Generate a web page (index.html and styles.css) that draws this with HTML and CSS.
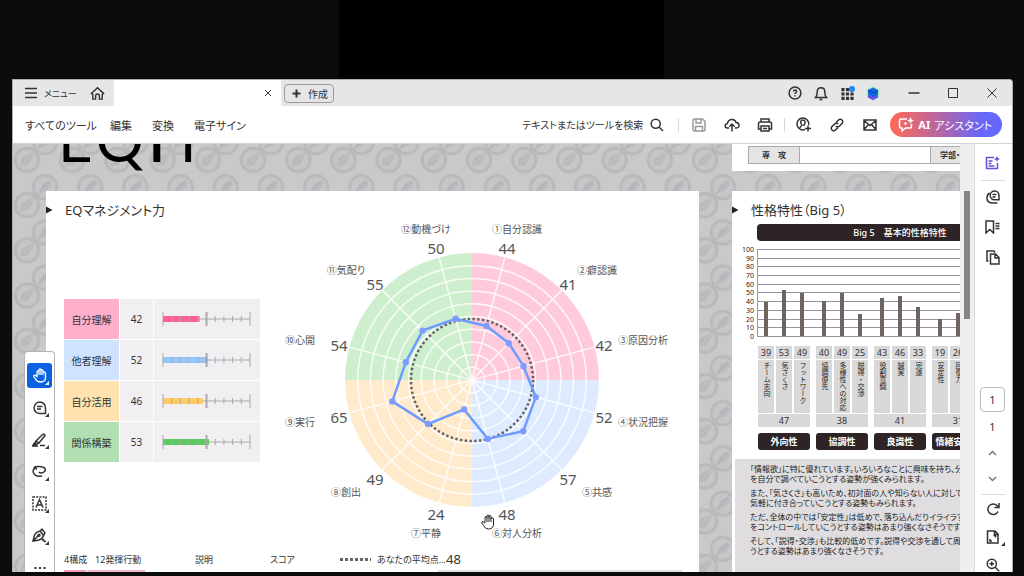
FILE: index.html
```html
<!DOCTYPE html>
<html lang="ja">
<head>
<meta charset="utf-8">
<meta name="viewport" content="width=device-width, initial-scale=1">
<title>EQマネジメント力</title>
<link rel="stylesheet" href="styles.css">
</head>
<body>
<div class="stage-top"><div class="stage-notch"></div></div>
<div class="window">
  <header class="titlebar">
    <button class="menu-btn"><svg class="ico" width="12" height="12" viewBox="0 0 12 12"><path d="M0 1.500h12M0 6h12M0 10.500h12"/></svg>メニュー</button>
    <button class="home-btn" aria-label="ホーム"><svg class="ico" width="15" height="15" viewBox="0 0 16 16"><path d="M1.500 8L8 1.800L14.500 8L13 9V14H10V10.500a2 2 0 0 0-4 0V14H3V9Z"/></svg></button>
    <div class="tab"><button class="tab-close" aria-label="タブを閉じる"><svg class="ico thin" width="8" height="8" viewBox="0 0 8 8"><path d="M1 1l6 6M7 1l-6 6"/></svg></button></div>
    <button class="create-btn"><svg class="ico bold" width="9" height="9" viewBox="0 0 9 9"><path d="M4.500 0.500v8M0.500 4.500h8"/></svg>作成</button>
    <div class="status-icons">
      <button aria-label="ヘルプ"><svg class="ico" width="14" height="14" viewBox="0 0 14 14"><circle cx="7" cy="7" r="5.900"/><path d="M5.500 5.600c0-2 3.100-2 3.100 0c0 1.100-1.600 1.200-1.600 2.300M7 9.300v1.100"/></svg></button>
      <button aria-label="通知"><svg class="ico" width="14" height="15" viewBox="0 0 14 15"><path d="M1.500 11.500C3.500 9.500 3 8 3.200 5.500c.3-4.900 7.300-4.900 7.600 0C11 8 10.500 9.500 12.500 11.500ZM5.500 13.500h3"/></svg></button>
      <button aria-label="アプリ"><svg width="15" height="15" viewBox="0 0 15 15"><path d="M3 2v12M7.500 2v12M12 2v12" stroke="#333" stroke-width="3.200" stroke-dasharray="3.200 1.200"/><circle cx="12" cy="3" r="3" fill="#1b87f5"/></svg></button>
      <button aria-label="アカウント"><svg width="14" height="15" viewBox="0 0 14 15"><path d="M7 0l6.500 3.500v7.500l-6.500 4-6.500-4v-7.500Z" fill="#a5efc0"/><path d="M7 1.500l5 2.500v5L7 12 2 9V4Z" fill="#1266dd"/><path d="M2 9l5 2.500L12 9v2.500L7 14l-5-2.500Z" fill="#7046ee"/><path d="M2 4.500l5 2.500 5-2.500" fill="none" stroke="#0934ad"/></svg></button>
    </div>
    <div class="window-btns">
      <button aria-label="最小化"><svg class="ico" width="12" height="12" viewBox="0 0 12 12"><path d="M0.500 6h11"/></svg></button>
      <button aria-label="最大化"><svg class="ico thin" width="12" height="12" viewBox="0 0 12 12"><path d="M1.500 1.500h9v9h-9z"/></svg></button>
      <button aria-label="閉じる"><svg class="ico thin" width="12" height="12" viewBox="0 0 12 12"><path d="M1.500 1.500l9 9M10.500 1.500l-9 9"/></svg></button>
    </div>
  </header>

  <div class="toolbar">
    <nav class="tool-menu">
      <button>すべてのツール</button><button>編集</button><button>変換</button><button>電子サイン</button>
    </nav>
    <input class="search" type="text" placeholder="テキストまたはツールを検索" aria-label="検索">
    <button class="search-btn" aria-label="検索"><svg class="ico" width="14" height="14" viewBox="0 0 14 14"><circle cx="5.700" cy="5.700" r="4.500"/><path d="M9 9l4 4"/></svg></button>
    <span class="sep"></span>
    <div class="tool-icons">
      <button class="dim" aria-label="保存"><svg class="ico" width="14" height="14" viewBox="0 0 14 14"><path d="M1 2.500Q1 1 2.500 1H10.500L13 3.500V11.500Q13 13 11.500 13H2.500Q1 13 1 11.500ZM4 1v4h5V1M3.500 13V8.500h7V13"/></svg></button>
      <button aria-label="アップロード"><svg class="ico" width="16" height="14" viewBox="0 0 16 14"><path d="M5 10H3.500C0.500 10 0.300 6 3.500 5.500C4 0.500 11 0 12 4.500c4 0 4 5.500 0.500 5.500H11M8 13.500V6M5.300 8.700L8 6l2.700 2.700"/></svg></button>
      <button aria-label="印刷"><svg class="ico" width="16" height="14" viewBox="0 0 16 14"><path d="M4 4V1h8v3M4 11H1.500V6Q1.500 4 3 4h10q1.500 0 1.500 2v5H12M4 8h8v5H4ZM6 10.500h4"/></svg></button>
      <span class="sep"></span>
      <button aria-label="共有"><svg class="ico" width="16" height="15" viewBox="0 0 16 15"><path d="M9 12.500A5.900 5.900 0 1 1 12.700 8M4 11c.3-2 2-2 2-3C3.500 5.500 5 3 6.800 3s3.300 2.500 1.200 5v1M12 8.500v6M9 11.500h6"/></svg></button>
      <button aria-label="リンク"><svg class="ico" width="14" height="14" viewBox="0 0 14 14"><path d="M6 4.500L8.500 2a2.400 2.400 0 0 1 3.500 3.500L9.500 8a2.400 2.400 0 0 1-3.700 0M8 9.500L5.500 12A2.400 2.400 0 0 1 2 8.500L4.500 6a2.400 2.400 0 0 1 3.700 0"/></svg></button>
      <button aria-label="メール"><svg class="ico" width="14" height="12" viewBox="0 0 14 12"><path d="M1 1h12v10H1ZM1 1.500l6 5 6-5M1 10.500l4.500-5M13 10.500L8.500 5.500"/></svg></button>
    </div>
    <button class="ai-btn"><svg width="16" height="15" viewBox="0 0 16 15" fill="none" stroke="#fff" stroke-width="1.500"><path d="M9 2H3Q1.500 2 1.500 3.500v6Q1.500 11 3 11h1v3l3.500-3H12q1.500 0 1.500-1.500V7"/><path d="M12.500 0.500l.8 2.200 2.200.8-2.200.8-.8 2.200-.8-2.200-2.200-.8 2.200-.8ZM7.500 5l.5 1 1 .5-1 .5-.5 1-.5-1-1-.5 1-.5Z" fill="#fff" stroke-width=".5"/></svg><b>AI</b> アシスタント</button>
  </div>

  <div class="content">
    <main class="viewer">
      <svg class="backdrop" width="100%" height="100%" aria-hidden="true">
        <defs>
          <g id="ring"><circle r="11.800" fill="#c6c6c7" stroke="#b9b9bb" stroke-width="3"/></g>
          <g id="compass-a"><use href="#ring"/><path d="M9-9L1 5-7 6-5-2Z" fill="#b9b9bd"/><path d="M-5 4L7-7" stroke="#c4c4c7"/></g>
          <g id="compass-b"><use href="#ring"/><path d="M-8 8L-2-3 5-7 7-3 2 3Z" fill="#b5b5bc"/><path d="M-4 6L6-4" stroke="#c0c0c4"/></g>
          <pattern id="compasses" width="45.200" height="45.200" patternUnits="userSpaceOnUse">
            <use href="#compass-b" x="32" y="-2"/><use href="#compass-b" x="32" y="43.200"/><use href="#compass-b" x="-13.200" y="-2"/><use href="#compass-b" x="-13.200" y="43.200"/>
            <use href="#compass-a" x="14" y="16"/><use href="#compass-a" x="59.200" y="16"/>
          </pattern>
        </defs>
        <rect width="100%" height="100%" fill="#c9c9c9"/>
        <rect width="100%" height="100%" fill="url(#compasses)"/>
      </svg>

      <section class="left-col">
        <div class="logo"><span>E</span><span>Q</span><span class="tall">P</span><span>I</span></div>
        <article class="page">
          <h2 class="page-title"><svg class="marker" width="7" height="8" viewBox="0 0 7 8"><path d="M0 0.500l6.500 3.500L0 7.500Z"/></svg>EQマネジメント力</h2>
          <div class="page-body">
            <table class="scores">
              <tr><th class="pink">自分理解</th><td>42</td><td class="gauge"><svg width="90" height="16" viewBox="0 0 90 16"><path class="rule" d="M1 8h87"/><path d="M1 8h36.500" stroke="#ff5f94" stroke-width="6"/><use href="#scale"/></svg></td></tr>
              <tr><th class="blue">他者理解</th><td>52</td><td class="gauge"><svg width="90" height="16" viewBox="0 0 90 16"><path class="rule" d="M1 8h87"/><path d="M1 8h45.200" stroke="#93c4fb" stroke-width="6"/><use href="#scale"/></svg></td></tr>
              <tr><th class="amber">自分活用</th><td>46</td><td class="gauge"><svg width="90" height="16" viewBox="0 0 90 16"><path class="rule" d="M1 8h87"/><path d="M1 8h40" stroke="#ffcb62" stroke-width="6"/><use href="#scale"/></svg></td></tr>
              <tr><th class="green">関係構築</th><td>53</td><td class="gauge"><svg width="90" height="16" viewBox="0 0 90 16"><defs><g id="scale" stroke="#aaa8ab"><path d="M1 1v14M88 1v14"/><path d="M9.700 5v6M18.400 5v6M27.100 5v6M35.800 5v6M53.200 5v6M61.900 5v6M70.600 5v6M79.300 5v6"/><path d="M44.500 1v14" stroke-width="2"/></g></defs><path class="rule" d="M1 8h87"/><path d="M1 8h46" stroke="#5ccb5f" stroke-width="6"/><use href="#scale"/></svg></td></tr>
            </table>
            <svg class="radar" width="360" height="324" viewBox="-152 -161 360 324">
              <path d="M0 0V-127A127 127 0 0 1 127 0Z" fill="#ffcbdb"/><path d="M0 0H127A127 127 0 0 1 0 127Z" fill="#deebff"/><path d="M0 0V127A127 127 0 0 1-127 0Z" fill="#ffebcb"/><path d="M0 0H-127A127 127 0 0 1 0-127Z" fill="#ceefcd"/>
              <g fill="none" stroke="#fff" stroke-width="1.500" opacity=".85"><circle r="12.700"/><circle r="25.400"/><circle r="38.100"/><circle r="50.800"/><circle r="63.500"/><circle r="76.200"/><circle r="88.900"/><circle r="101.600"/><circle r="114.300"/>
              <path d="M32.900-122.700L-32.900 122.700M89.800-89.800L-89.800 89.800M122.700-32.900L-122.700 32.900M122.700 32.900L-122.700-32.900M89.800 89.800L-89.800-89.800M32.900 122.700L-32.900-122.700"/></g>
              <circle r="61" fill="none" stroke="#646064" stroke-width="2.500" stroke-dasharray="2.400 2.390"/>
              <path d="M14.500-54L36.800-36.800 51.500-13.800 63.800 17.100 51.200 51.200 15.800 58.900-7.900 29.400-44 44-79.700 21.400-66.200-17.800-49.400-49.400-16.400-61.300Z" fill="none" stroke="#6e9bff" stroke-width="2.500"/>
              <g fill="#7e9bff"><circle cx="14.500" cy="-54" r="3.200"/><circle cx="36.800" cy="-36.800" r="3.200"/><circle cx="51.500" cy="-13.800" r="3.200"/><circle cx="63.800" cy="17.100" r="3.200"/><circle cx="51.200" cy="51.200" r="3.200"/><circle cx="15.800" cy="58.900" r="3.200"/><circle cx="-7.900" cy="29.400" r="3.200"/><circle cx="-44" cy="44" r="3.200"/><circle cx="-79.700" cy="21.400" r="3.200"/><circle cx="-66.200" cy="-17.800" r="3.200"/><circle cx="-49.400" cy="-49.400" r="3.200"/><circle cx="-16.400" cy="-61.300" r="3.200"/></g>
              <g class="radar-num"><text x="35" y="-126">44</text><text x="96" y="-90">41</text><text x="132" y="-29">42</text><text x="132" y="43">52</text><text x="96" y="105">57</text><text x="35" y="140">48</text><text x="-36" y="140">24</text><text x="-97" y="105">49</text><text x="-133" y="43">65</text><text x="-133" y="-29">54</text><text x="-97" y="-90">55</text><text x="-36" y="-126">50</text></g>
              <g class="radar-label"><text x="45" y="-147">①自分認識</text><text x="125" y="-106">②癖認識</text><text x="171" y="-36">③原因分析</text><text x="171" y="46">④状況把握</text><text x="125" y="116">⑤共感</text><text x="45" y="157">⑥対人分析</text><text x="-46" y="157">⑦平静</text><text x="-126" y="116">⑧創出</text><text x="-172" y="46">⑨実行</text><text x="-172" y="-36">⑩心開</text><text x="-126" y="-106">⑪気配り</text><text x="-46" y="-147">⑫動機づけ</text></g>
            </svg>
          </div>
          <div class="page-foot">
            <span class="f1">4構成</span><span class="f2">12発揮行動</span><span class="f3">説明</span><span class="f4">スコア</span>
            <span class="legend"><i class="dots"></i>あなたの平均点…<b>48</b></span>
          </div>
          <div class="strips"><i class="s1"></i><i class="s2"></i><i class="s3"></i></div>
          <svg class="grab-cursor" width="14" height="16" viewBox="0 0 14 16"><path d="M4 9V4q0-1.500 1-1.500T6 4V2q0-1 1-1t1 1v2-1.500q0-1 1-1t1 1V5q0-1.200 1.200-1.200T12.500 5V10q0 5-5 5Q4 15 2.500 11.500L.8 9q-.3-1.500 1.200-1.300L4 9M6 4v4M8 4v4M10 4v4" fill="#fff" stroke="#222"/></svg>
        </article>
      </section>

      <section class="right-col">
        <div class="form-card"><div class="form-row"><span class="cell">専　攻</span><span class="blank"></span><span class="cell wide">学部・学科</span></div></div>
        <article class="page traits">
          <h2 class="page-title"><svg class="marker" width="7" height="8" viewBox="0 0 7 8"><path d="M0 0.500l6.500 3.500L0 7.500Z"/></svg>性格特性（Big 5）</h2>
          <div class="band">Big 5　基本的性格特性</div>
          <svg class="bars" width="310" height="100" viewBox="0 0 310 100">
            <path d="M25 6.500H310M25 15.500H310M25 23.500H310M25 32.500H310M25 41.500H310M25 49.500H310M25 58.500H310M25 67.500H310M25 76.500H310M25 84.500H310M25.500 6V93.500H310" fill="none" stroke="#969496"/>
            <g fill="#6e6560"><path d="M32 59h4v34h-4zM50 47h4v46h-4zM68 50h4v43h-4zM90 58h4v35h-4zM108 50h4v43h-4zM126 71h4v22h-4zM148 55h4v38h-4zM166 53h4v40h-4zM184 64h4v29h-4zM206 76h4v17h-4zM224 70h4v23h-4z"/></g>
            <g class="axis"><text x="22" y="9">100</text><text x="22" y="18">90</text><text x="22" y="26">80</text><text x="22" y="35">70</text><text x="22" y="44">60</text><text x="22" y="52">50</text><text x="22" y="61">40</text><text x="22" y="70">30</text><text x="22" y="79">20</text><text x="22" y="87">10</text><text x="22" y="96">0</text></g>
          </svg>
          <div class="groups">
            <div class="group"><b>39</b><b>53</b><b>49</b><span>チーム志向</span><span>気さくさ</span><span>フットワーク</span><em>47</em><strong>外向性</strong></div>
            <div class="group"><b>40</b><b>49</b><b>25</b><span>協調優先</span><span>多様性への対応</span><span>説得・交渉</span><em>38</em><strong>協調性</strong></div>
            <div class="group"><b>43</b><b>46</b><b>33</b><span>役割意識</span><span>誠実</span><span>完遂</span><em>41</em><strong>良識性</strong></div>
            <div class="group"><b>19</b><b>26</b><b></b><span>安定性</span><span>回復力</span><span></span><em>31</em><strong>情緒安定性</strong></div>
          </div>
          <div class="comment">
            <p>「情報欲」に特に優れています。いろいろなことに興味を持ち、分からないこと<br>を自分で調べていこうとする姿勢が強くみられます。</p>
            <p>また、「気さくさ」も高いため、初対面の人や知らない人に対して、自分から<br>気軽に付き合っていこうとする姿勢もみられます。</p>
            <p>ただ、全体の中では「安定性」は低めで、落ち込んだりイライラすること<br>をコントロールしていこうとする姿勢はあまり強くなさそうです。</p>
            <p>そして、「説得・交渉」も比較的低めです。説得や交渉を通して周囲を<br>うとする姿勢はあまり強くなさそうです。</p>
          </div>
        </article>
      </section>

      <div class="palette">
        <i class="grip"></i>
        <button class="active" aria-label="手のひら"><svg width="14" height="15" viewBox="0 0 14 15"><path d="M4 8.500V4q0-1.200 1-1.200T6 4V2q0-1 1-1t1 1v2-1q0-1 1-1t1 1V5q0-1.200 1.200-1.200T12.500 5v4.500q0 4.500-5 4.500Q4 14 2.500 11L.8 8.500q-.3-1.500 1.200-1.300ZM6 4v3M8 4v3M10 4v3" fill="none" stroke="#fff" stroke-width="1.300"/></svg></button>
        <button aria-label="コメント"><svg class="ico" width="14" height="14" viewBox="0 0 14 14"><path d="M12.500 12.500H7A5.700 5.700 0 1 1 12.500 7ZM4 5.500h5.500M4 8h4"/></svg></button>
        <button aria-label="ハイライト"><svg class="ico" width="15" height="14" viewBox="0 0 15 14"><path d="M4 8L10.500 1.500q2-1 2.500 1L7 10ZM4 8l-1.500 4L7 10M8 12.500h5"/><path d="M0.500 13l2-3 2.500 3Z" fill="#333"/></svg></button>
        <button aria-label="描画"><svg class="ico" width="15" height="13" viewBox="0 0 15 13"><path d="M5 4C1 3 1 1.500 7 1.500C14 1.500 15 6 11 7.500Q8 8.500 7 7M4.500 1.800Q0 4 1.500 8t8.500 3"/></svg></button>
        <button aria-label="テキスト"><svg class="ico" width="15" height="15" viewBox="0 0 15 15"><path d="M1 1h13v13H1Z" stroke-dasharray="2 1.200"/><path d="M4 11.500L7.500 3.500 11 11.500M5.300 9h4.400"/></svg></button>
        <button aria-label="署名"><svg class="ico" width="15" height="15" viewBox="0 0 15 15"><path d="M1 13L2.500 7Q4 4 8 3l3.500 4.500Q10.500 11 7 12ZM8 3L10 1.200 13 5 11.500 7.500M1 13L6.500 7.500M10 12.500q2-2 2 0t2 .5"/><circle cx="7" cy="7.300" r="1"/></svg></button>
        <button class="more" aria-label="その他"><svg width="12" height="4" viewBox="0 0 12 4"><path d="M0.500 2h2M5 2h2M9.500 2h2" stroke="#333" stroke-width="2"/></svg></button>
      </div>
    </main>
    <div class="scrollbar"><i class="thumb"></i></div>
    <aside class="rail">
      <button class="violet" aria-label="AI アシスタント"><svg class="ico" width="15" height="14" viewBox="0 0 15 14"><path d="M9 1.500H1.500v11h11V7M3.500 5h4M3.500 7.500h3M3.500 10h6"/><path d="M12 0l.9 2.100 2.100.9-2.100.9L12 6l-.9-2.100L9 3l2.100-.9Z" fill="#6153d4" stroke="none"/></svg></button>
      <hr>
      <button aria-label="コメント"><svg class="ico" width="14" height="14" viewBox="0 0 14 14"><path d="M13 9.800H8.500A4.400 4.400 0 1 1 13 5.500ZM6.500 4.500h4M6.500 7h3M3.500 3Q1 4.500 1 8q0 5 6 5h4.500"/></svg></button>
      <button aria-label="しおり"><svg class="ico" width="15" height="14" viewBox="0 0 15 14"><path d="M1 1h7.500v12L4.800 9.500 1 13ZM10.500 3.500h4M10.500 6h4M10.500 8.500h4"/></svg></button>
      <button aria-label="ページ"><svg class="ico" width="14" height="15" viewBox="0 0 14 15"><path d="M4.500 4h5l3.500 3.500V14H4.500ZM9 4v4h4M2.500 11H1V1h7l1 1.500"/></svg></button>
      <input class="page-no" type="text" value="1" aria-label="ページ番号">
      <span class="page-total">1</span>
      <button class="grey" aria-label="前のページ"><svg class="ico" width="9" height="6" viewBox="0 0 9 6"><path d="M1 5l3.500-3.500L8 5"/></svg></button>
      <button class="grey" aria-label="次のページ"><svg class="ico" width="9" height="6" viewBox="0 0 9 6"><path d="M1 1l3.500 3.500L8 1"/></svg></button>
      <hr>
      <button aria-label="回転"><svg class="ico" width="14" height="14" viewBox="0 0 14 14"><path d="M12 9.500A5.300 5.300 0 1 1 11 3.500L12.500 5M13 1v4.500H8.500"/></svg></button>
      <button class="corner" aria-label="表示"><svg class="ico" width="14" height="14" viewBox="0 0 14 14"><path d="M1.500 1H9l3 3v9H1.500ZM8.500 1v3.500H12M4 9v2h2M9.500 7.500v-2h-2"/></svg></button>
      <button aria-label="拡大"><svg class="ico" width="14" height="14" viewBox="0 0 14 14"><circle cx="5.800" cy="5.800" r="4.600"/><path d="M9.200 9.200l4 4M3.500 5.800h4.600M5.800 3.500v4.600"/></svg></button>
    </aside>
  </div>
</div>
</body>
</html>
```

FILE: styles.css
```css
* { box-sizing: border-box; }
body {
  margin: 0;
  height: 100vh;
  display: flex;
  flex-direction: column;
  overflow: hidden;
  background: #0c0c0c;
  color: #333;
  font-family: "Noto Sans", "Noto Sans CJK JP", sans-serif;
  font-size: 11px;
  font-feature-settings: "palt";
}
button, input { font: inherit; font-feature-settings: inherit; color: inherit; border: 0; padding: 0; margin: 0; background: none; }
button { display: flex; align-items: center; justify-content: center; white-space: nowrap; }
svg { display: block; flex: none; }
.ico { fill: none; stroke: #333; stroke-width: 1.5; }
.ico.bold { stroke-width: 2; }
.ico.thin { stroke-width: 1; }

.stage-top { flex: 0 0 79px; display: flex; justify-content: center; }
.stage-notch { width: 325px; margin-right: 21px; background: #000; }
.window {
  flex: 1;
  min-height: 0;
  margin: 0 11px 4px 12px;
  display: flex;
  flex-direction: column;
  background: #fff;
  border: 1px solid #b5aaae;
  border-bottom: 0;
  border-radius: 0 4px 0 0;
  overflow: hidden;
}

.titlebar { flex: 0 0 26px; display: flex; align-items: center; background: #e6e6e8; }
.menu-btn { justify-content: flex-start; gap: 7px; padding-left: 12px; width: 68px; font-size: 9px; }
.home-btn { width: 33px; height: 26px; }
.tab { width: 167px; align-self: stretch; display: flex; justify-content: flex-end; align-items: center; padding-right: 9px; background: #fff; }
.create-btn { margin-left: 3px; height: 19px; padding: 0 5px 0 7px; gap: 7px; font-size: 10px; border: 1px solid #9c9c9e; border-radius: 4px; }
.status-icons { margin-left: auto; margin-right: 8px; display: flex; }
.status-icons button { width: 26px; height: 26px; }
.window-btns { display: flex; padding-right: 1px; }
.window-btns button { width: 39px; height: 24px; }

.toolbar { flex: 0 0 38px; display: flex; align-items: center; padding: 0 10px 0 12px; border-bottom: 1px solid #d4d4d5; }
.tool-menu { display: flex; }
.tool-menu button { min-width: 42px; padding-right: 13px; justify-content: flex-start; }
.search { margin-left: auto; width: 144px; text-align: right; font-size: 10px; }
.search::placeholder { color: #333; opacity: 1; }
.search-btn { width: 28px; height: 28px; }
.sep { width: 1px; height: 14px; background: #d8d8da; margin: 0 3px 0 7px; }
.tool-icons { display: flex; align-items: center; }
.tool-icons button { width: 33px; height: 28px; }
.tool-icons .sep { margin: 0 2px 0 3px; }
.dim .ico { stroke: #999; }
.ai-btn { height: 25px; margin-left: 4px; padding: 0 10px 0 8px; gap: 4px; border-radius: 13px; color: #fff; background: linear-gradient(90deg, #ff6b55, #b465a5 45%, #6667fb 82%); }

.content { flex: 1; min-height: 0; display: flex; }
.viewer { flex: 1; min-width: 0; position: relative; display: flex; gap: 33px; padding-left: 33px; overflow: hidden; white-space: nowrap; }
.backdrop { position: absolute; inset: 0; }
.left-col { position: relative; flex: 0 0 653px; display: flex; flex-direction: column; }
.right-col { position: relative; flex: 0 0 327px; display: flex; flex-direction: column; }
.logo { flex: 0 0 47px; display: flex; align-items: baseline; gap: 3px; padding-left: 12px; color: #000; font-family: Lato, sans-serif; font-size: 60px; line-height: 0; overflow: hidden; }
.logo span { margin-top: -10px; }
.logo .tall { width: 30px; font-size: 72px; }
.page { position: relative; flex: 1; min-height: 0; background: #fff; padding-top: 10px; }
.page-title { display: flex; align-items: center; gap: 12px; margin: 0; height: 18px; font-size: 13px; font-weight: 400; line-height: 18px; }
.marker { fill: #222; }

.page-body { display: flex; align-items: flex-start; }
.scores { margin: 79px 59px 0 17px; border-spacing: 1px; font-size: 10px; }
.scores th, .scores td { height: 40px; padding: 0; text-align: center; font-weight: 400; background: #f1eff1; }
.scores th { width: 55px; }
.scores td { width: 33px; }
.scores .gauge { width: 106px; padding-left: 8px; }
.scores .pink { background: #ffaecb; }
.scores .blue { background: #cfe3ff; }
.scores .amber { background: #ffe2b0; }
.scores .green { background: #b1dfb2; }
.rule { stroke: #aaa8ab; }
.radar { overflow: visible; }
.radar text { text-anchor: middle; fill: #555; }
.radar-num { font-size: 15px; }
.radar-label { font-size: 10px; }

.page-foot { display: flex; align-items: center; height: 20px; margin-top: 6px; padding-left: 18px; font-size: 9px; }
.f1 { width: 31px; }
.f2 { width: 100px; }
.f3 { width: 75px; }
.f4 { width: 70px; }
.legend { display: flex; align-items: center; }
.legend b { font-size: 13px; font-weight: 400; }
.dots { width: 31px; height: 3px; margin-right: 6px; background: repeating-linear-gradient(90deg, #666 0 3px, transparent 3px 5px); }
.strips { display: flex; gap: 1px; margin-top: 1px; padding-left: 18px; height: 6px; }
.s1 { width: 22px; background: #f69ac0; }
.s2 { width: 58px; background: #f9b4cc; }
.s3 { width: 244px; margin-left: 292px; background: #e2e0e2; }
.grab-cursor { position: absolute; left: 435px; top: 323px; }

.form-card { flex: 0 0 27px; margin-bottom: 20px; background: #fff; padding: 2px 0 0 16px; }
.form-row { display: flex; height: 18px; border: 1px solid #aaa; font-size: 8px; line-height: 16px; font-weight: 700; }
.cell { flex: 0 0 51px; text-align: center; background: #e4e4e5; border-right: 1px solid #aaa; }
.blank { flex: 0 0 130px; }
.cell.wide { flex: 1; padding-left: 9px; text-align: left; border-left: 1px solid #aaa; }
.band { width: 286px; height: 17px; margin: 5px 0 2px 25px; border-radius: 4px; background: #2e2425; color: #fff; font-size: 9px; font-weight: 500; line-height: 17px; text-align: center; }
.axis text { text-anchor: end; font-size: 7px; fill: #222; }
.groups { display: flex; gap: 6px; margin: 3px 0 9px 26px; }
.group { flex: 0 0 52px; display: grid; grid-template-columns: repeat(3, 16px); grid-template-rows: 13px 53px 13px 22px; gap: 1px 2px; text-align: center; font-size: 9px; line-height: 13px; }
.group b, .group span, .group em { background: #d8d8d8; font-weight: 400; font-style: normal; }
.group span { padding-top: 2px; writing-mode: vertical-rl; line-height: 16px; font-size: 7px; text-align: left; font-feature-settings: normal; color: #222; }
.group em, .group strong { grid-column: 1 / -1; }
.group strong { margin-top: 5px; height: 17px; border-radius: 3px; background: #2e2425; color: #fff; line-height: 17px; }
.comment { height: 130px; margin-left: 3px; padding: 5px 0 0 15px; background: #dfdde0; color: #222; font-size: 8px; line-height: 10px; }
.comment p { margin: 0 0 4px; }

.palette { position: absolute; left: 11px; top: 207px; bottom: 0; width: 31px; padding: 3px 2px 0; background: #fff; border: 1px solid #b4b4b4; border-bottom: 0; border-radius: 4px 4px 0 0; display: flex; flex-direction: column; gap: 7px; }
.grip { height: 3px; margin-bottom: 1px; border-radius: 2px; background: #aaa; }
.palette button { position: relative; flex: 0 0 25px; border-radius: 3px; }
.palette .active { background: #0b62e0; }
.palette button:not(.more)::after, .corner::after { content: ""; position: absolute; right: 3px; bottom: 3px; border: 2px solid; border-color: transparent #333 #333 transparent; }
.palette button.active:not(.more)::after { border-color: transparent #fff #fff transparent; }

.scrollbar { flex: 0 0 14px; padding: 47px 4px 0; background: #f0eef1; }
.thumb { display: block; width: 6px; height: 128px; background: #858487; }
.rail { flex: 0 0 38px; display: flex; flex-direction: column; align-items: center; padding: 4px 2px 0 0; border-left: 1px solid #d9d9da; overflow: hidden; }
.rail button { position: relative; flex: 0 0 30px; width: 30px; }
.rail hr { flex: none; width: 24px; height: 1px; margin: 2px 0 1px; border: 0; background: #ddd; }
.rail .violet .ico { stroke: #6153d4; }
.page-no { flex: none; width: 25px; height: 25px; margin: 115px 0 2px; text-align: center; border: 1px solid #bbb; border-radius: 4px; }
.page-total { height: 26px; line-height: 26px; }
.rail .grey { flex-basis: 26px; }
.grey .ico { stroke: #777; }
.rail hr ~ hr { margin: 2px 0 0; }
.rail hr ~ hr ~ button { flex-basis: 28px; }
.corner::after { bottom: 5px; }
```
